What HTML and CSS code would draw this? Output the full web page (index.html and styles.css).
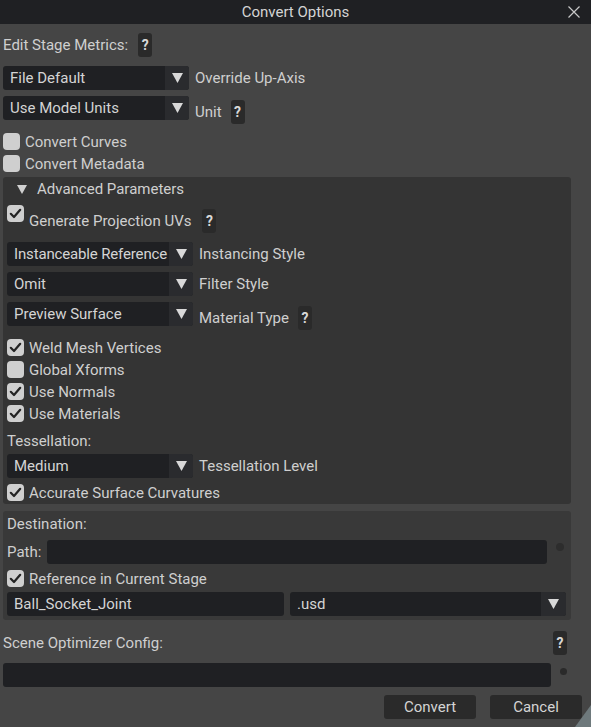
FILE: index.html
```html
<!DOCTYPE html>
<html>
<head>
<meta charset="utf-8">
<link rel="stylesheet" href="styles.css">
</head>
<body>
<div class="window">
  <div class="titlebar">
    <span class="title">Convert Options</span>
    <svg class="close" width="12" height="12" viewBox="0 0 12 12"><path d="M0.5 0.5 L11.5 11.5 M11.5 0.5 L0.5 11.5" stroke="#c8c8c8" stroke-width="1.2" fill="none"/></svg>
  </div>
  <div class="content">
    <div class="row h24 mt9">
      <span class="label">Edit Stage Metrics:</span>
      <span class="help gap10">?</span>
    </div>
    <div class="row h24 mt9">
      <div class="combo w186"><span class="combo-text">File Default</span><span class="combo-arrow"><svg width="11" height="10" viewBox="0 0 11 10"><polygon points="0,0 11,0 5.5,10" fill="#d8d8d8"/></svg></span></div>
      <span class="label gap6">Override Up-Axis</span>
    </div>
    <div class="row mt6 top">
      <div class="combo w186"><span class="combo-text">Use Model Units</span><span class="combo-arrow"><svg width="11" height="10" viewBox="0 0 11 10"><polygon points="0,0 11,0 5.5,10" fill="#d8d8d8"/></svg></span></div>
      <div class="shifted gap6"><span class="label">Unit</span><span class="help gap9">?</span></div>
    </div>
    <div class="check-row mt9"><span class="checkbox"></span><span class="label">Convert Curves</span></div>
    <div class="check-row"><span class="checkbox"></span><span class="label">Convert Metadata</span></div>

    <div class="frame advanced">
      <div class="row h24 header">
        <svg class="tri" width="10" height="9" viewBox="0 0 10 9"><polygon points="0,0 10,0 5,9" fill="#d0d0d0"/></svg>
        <span class="label">Advanced Parameters</span>
      </div>
      <div class="row top mt4">
        <span class="checkbox checked"><svg width="17" height="17" viewBox="0 0 17 17"><path d="M3.8 8.8 L7 12 L13.2 4.8" stroke="#232323" stroke-width="2.2" fill="none" stroke-linecap="round" stroke-linejoin="round"/></svg></span>
        <div class="shifted gap5"><span class="label">Generate Projection UVs</span><span class="help gap11">?</span></div>
      </div>
      <div class="row h24 mt9">
        <div class="combo w186"><span class="combo-text tight">Instanceable Reference</span><span class="combo-arrow"><svg width="11" height="10" viewBox="0 0 11 10"><polygon points="0,0 11,0 5.5,10" fill="#d8d8d8"/></svg></span></div>
        <span class="label gap6">Instancing Style</span>
      </div>
      <div class="row h24 mt6">
        <div class="combo w186"><span class="combo-text">Omit</span><span class="combo-arrow"><svg width="11" height="10" viewBox="0 0 11 10"><polygon points="0,0 11,0 5.5,10" fill="#d8d8d8"/></svg></span></div>
        <span class="label gap6">Filter Style</span>
      </div>
      <div class="row top mt6">
        <div class="combo w186"><span class="combo-text">Preview Surface</span><span class="combo-arrow"><svg width="11" height="10" viewBox="0 0 11 10"><polygon points="0,0 11,0 5.5,10" fill="#d8d8d8"/></svg></span></div>
        <div class="shifted gap6"><span class="label">Material Type</span><span class="help gap9">?</span></div>
      </div>
      <div class="check-row mt9"><span class="checkbox checked"><svg width="17" height="17" viewBox="0 0 17 17"><path d="M3.8 8.8 L7 12 L13.2 4.8" stroke="#232323" stroke-width="2.2" fill="none" stroke-linecap="round" stroke-linejoin="round"/></svg></span><span class="label">Weld Mesh Vertices</span></div>
      <div class="check-row"><span class="checkbox"></span><span class="label">Global Xforms</span></div>
      <div class="check-row"><span class="checkbox checked"><svg width="17" height="17" viewBox="0 0 17 17"><path d="M3.8 8.8 L7 12 L13.2 4.8" stroke="#232323" stroke-width="2.2" fill="none" stroke-linecap="round" stroke-linejoin="round"/></svg></span><span class="label">Use Normals</span></div>
      <div class="check-row"><span class="checkbox checked"><svg width="17" height="17" viewBox="0 0 17 17"><path d="M3.8 8.8 L7 12 L13.2 4.8" stroke="#232323" stroke-width="2.2" fill="none" stroke-linecap="round" stroke-linejoin="round"/></svg></span><span class="label">Use Materials</span></div>
      <div class="row h24 mt2"><span class="label">Tessellation:</span></div>
      <div class="row h24 mt1">
        <div class="combo w186"><span class="combo-text">Medium</span><span class="combo-arrow"><svg width="11" height="10" viewBox="0 0 11 10"><polygon points="0,0 11,0 5.5,10" fill="#d8d8d8"/></svg></span></div>
        <span class="label gap6">Tessellation Level</span>
      </div>
      <div class="check-row last mt6"><span class="checkbox checked"><svg width="17" height="17" viewBox="0 0 17 17"><path d="M3.8 8.8 L7 12 L13.2 4.8" stroke="#232323" stroke-width="2.2" fill="none" stroke-linecap="round" stroke-linejoin="round"/></svg></span><span class="label">Accurate Surface Curvatures</span></div>
    </div>

    <div class="frame destination">
      <div class="row h24"><span class="label">Destination:</span></div>
      <div class="row top mt4">
        <span class="label path-label">Path:</span>
        <div class="field w500"></div>
        <span class="dot dot-path"></span>
      </div>
      <div class="check-row last mt6"><span class="checkbox checked"><svg width="17" height="17" viewBox="0 0 17 17"><path d="M3.8 8.8 L7 12 L13.2 4.8" stroke="#232323" stroke-width="2.2" fill="none" stroke-linecap="round" stroke-linejoin="round"/></svg></span><span class="label">Reference in Current Stage</span></div>
      <div class="row h24 mt5">
        <div class="field w277"><span class="combo-text">Ball_Socket_Joint</span></div>
        <div class="combo w276 gap6"><span class="combo-text">.usd</span><span class="combo-arrow wide"><svg width="11" height="10" viewBox="0 0 11 10"><polygon points="0,0 11,0 5.5,10" fill="#d8d8d8"/></svg></span></div>
      </div>
    </div>

    <div class="row h24 optimizer">
      <span class="label">Scene Optimizer Config:</span>
      <span class="help">?</span>
    </div>
    <div class="row top mt8">
      <div class="field w548"></div>
      <span class="dot dot-config"></span>
    </div>
    <div class="buttons">
      <button class="btn">Convert</button>
      <button class="btn">Cancel</button>
    </div>
  </div>
  <div class="grip"></div>
</div>
</body>
</html>
```
FILE: styles.css
```css
* { box-sizing: border-box; }
html, body {
  margin: 0;
  padding: 0;
  background: #454545;
}
body {
  font-family: Roboto, "Liberation Sans", sans-serif;
  font-size: 15px;
  color: #cfcfcf;
}
.window {
  position: relative;
  width: 591px;
  height: 727px;
  overflow: hidden;
  background: #454545;
}
.titlebar {
  height: 24px;
  background: #1f2023;
  display: flex;
  align-items: center;
  justify-content: center;
  position: relative;
}
.title {
  font-size: 15px;
  color: #d4d4d4;
}
.close {
  position: absolute;
  right: 11px;
  top: 6px;
}
.content {
  padding-left: 3px;
  display: flex;
  flex-direction: column;
}
.row {
  display: flex;
  align-items: center;
}
.row.top { align-items: flex-start; }
.h24 { height: 24px; }
.mt1 { margin-top: 1px; }
.mt2 { margin-top: 2px; }
.mt4 { margin-top: 4px; }
.mt5 { margin-top: 5px; }
.mt6 { margin-top: 6px; }
.mt8 { margin-top: 8px; }
.mt9 { margin-top: 9px; }
.gap5 { margin-left: 5px; }
.gap6 { margin-left: 6px; }
.gap9 { margin-left: 9px; }
.gap10 { margin-left: 10px; }
.gap11 { margin-left: 11px; }
.label {
  white-space: nowrap;
  line-height: 16px;
}
.help {
  width: 14px;
  height: 24px;
  background: #2a2a2a;
  border-radius: 3px;
  display: flex;
  align-items: center;
  justify-content: center;
  font-weight: 700;
  font-size: 14px;
  color: #d8d8d8;
  flex: none;
}
.shifted {
  margin-top: 4px;
  height: 24px;
  display: flex;
  align-items: center;
}
.combo, .field {
  height: 24px;
  background: #1f2023;
  border-radius: 3px;
  display: flex;
  align-items: center;
  overflow: hidden;
  flex: none;
}
.combo-text {
  flex: 1;
  min-width: 0;
  padding-left: 7px;
  white-space: nowrap;
  overflow: hidden;
  color: #d4d4d4;
}
.combo-text.tight { letter-spacing: -0.15px; }
.combo-arrow {
  width: 24px;
  height: 24px;
  background: #2a2b2e;
  display: flex;
  align-items: center;
  justify-content: center;
  flex: none;
}
.combo-arrow.wide { width: 25px; }
.w186 { width: 186px; }
.w276 { width: 276px; }
.w277 { width: 277px; }
.w500 { width: 500px; }
.w548 { width: 548px; }
.check-row {
  display: flex;
  height: 22px;
  align-items: flex-start;
}
.check-row .label {
  margin-left: 5px;
  margin-top: 1px;
}
.check-row.last { height: 17px; }
.checkbox {
  width: 17px;
  height: 17px;
  background: #cfcfcf;
  border-radius: 4px;
  flex: none;
  display: block;
}
.checkbox svg { display: block; }
.frame {
  width: 568px;
  border-radius: 3px;
  padding: 0 4px;
  display: flex;
  flex-direction: column;
}
.advanced {
  background: #343434;
  padding-bottom: 3px;
}
.header .tri { margin-left: 10px; }
.header .label { margin-left: 10px; }
.destination {
  margin-top: 7px;
  background: #393939;
  padding-top: 1px;
  padding-bottom: 4px;
}
.path-label {
  width: 40px;
  height: 24px;
  line-height: 24px;
}
.dot {
  width: 8px;
  height: 8px;
  border-radius: 50%;
  background: #2d2d2d;
  flex: none;
}
.dot-path { margin-left: 9px; margin-top: 3px; }
.dot-config { margin-left: 9px; margin-top: 5px; width: 7px; height: 7px; background: #2a2a2a; }
.optimizer {
  margin-top: 11px;
  width: 564px;
  justify-content: space-between;
}
.buttons {
  margin-top: 8px;
  display: flex;
  justify-content: flex-end;
  padding-right: 9px;
  gap: 14px;
}
.btn {
  width: 92px;
  height: 24px;
  background: #2a2a2a;
  border: none;
  border-radius: 3px;
  color: #d4d4d4;
  font-family: Roboto, "Liberation Sans", sans-serif;
  font-size: 15px;
  padding: 0;
}
.grip {
  position: absolute;
  right: 0;
  bottom: 0;
  width: 16px;
  height: 22px;
  background: #6e797c;
  clip-path: polygon(100% 0, 100% 100%, 0 100%);
}
```
